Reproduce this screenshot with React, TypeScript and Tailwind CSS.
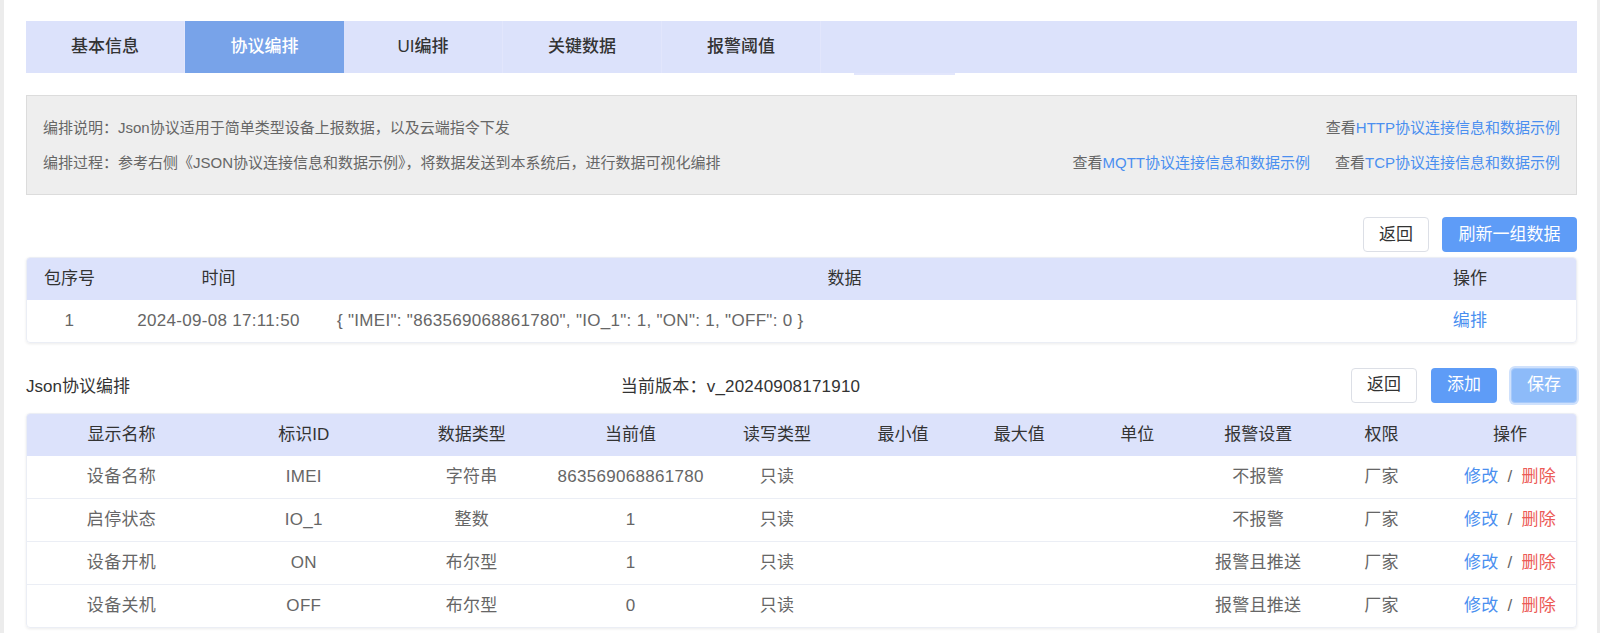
import React from "react";

const tabs = ["基本信息", "协议编排", "UI编排", "关键数据", "报警阈值"];

const c2 = [
  "w-[189px]",
  "w-[176px]",
  "w-[160px]",
  "w-[158px]",
  "w-[135px]",
  "w-[117px]",
  "w-[116px]",
  "w-[120px]",
  "w-[122px]",
  "w-[125px]",
  "w-[132px]",
];

const head2 = ["显示名称", "标识ID", "数据类型", "当前值", "读写类型", "最小值", "最大值", "单位", "报警设置", "权限", "操作"];

const rows2 = [
  ["设备名称", "IMEI", "字符串", "863569068861780", "只读", "", "", "", "不报警", "厂家"],
  ["启停状态", "IO_1", "整数", "1", "只读", "", "", "", "不报警", "厂家"],
  ["设备开机", "ON", "布尔型", "1", "只读", "", "", "", "报警且推送", "厂家"],
  ["设备关机", "OFF", "布尔型", "0", "只读", "", "", "", "报警且推送", "厂家"],
];

function Link({ children }: { children: React.ReactNode }) {
  return (
    <span className="text-[#666666]">
      查看<span className="text-[#4a8ff0]">{children}</span>
    </span>
  );
}

export default function App() {
  return (
    <div className="min-h-[633px] bg-[#ececec] pl-[4px] pr-[3px] font-['Liberation_Sans','Noto_Sans_CJK_SC',sans-serif]">
      <div className="h-[633px] overflow-hidden bg-white pl-[22px] pr-[20px] pt-[21px]">
        {/* Tabs */}
        <div className="relative flex h-[52px] bg-[#dce2fb]">
          {tabs.map((t, i) => (
            <div
              key={t}
              className={
                i === 1
                  ? "flex w-[159px] items-center justify-center bg-[#78a3e9] text-[17px] font-medium text-white"
                  : "flex w-[159px] items-center justify-center border-r border-[#e2e6fc] text-[17px] font-medium text-[#333333]"
              }
            >
              {t}
            </div>
          ))}
          <div className="absolute left-[828px] top-[52px] h-[2px] w-[101px] bg-[#e2e6fc]" />
        </div>

        {/* Info box */}
        <div className="mt-[22px] h-[100px] border border-[#dcdcdc] bg-[#eeeeee] pl-[16px] pr-[16px] pt-[22px] text-[15px] text-[#666666]">
          <div className="flex h-[20px] items-center justify-between">
            <span>编排说明：Json协议适用于简单类型设备上报数据，以及云端指令下发</span>
            <Link>HTTP协议连接信息和数据示例</Link>
          </div>
          <div className="mt-[15px] flex h-[20px] items-center justify-between">
            <span>编排过程：参考右侧《JSON协议连接信息和数据示例》，将数据发送到本系统后，进行数据可视化编排</span>
            <div className="flex gap-[25px]">
              <Link>MQTT协议连接信息和数据示例</Link>
              <Link>TCP协议连接信息和数据示例</Link>
            </div>
          </div>
        </div>

        {/* Buttons row 1 */}
        <div className="mt-[22px] flex justify-end gap-[13px]">
          <button className="h-[35px] w-[66px] rounded-[4px] border border-[#dcdfe6] bg-white text-[17px] text-[#333333]">
            返回
          </button>
          <button className="h-[35px] w-[135px] rounded-[4px] bg-[#5e9cf7] text-[17px] text-white">
            刷新一组数据
          </button>
        </div>

        {/* Table 1 */}
        <div className="mt-[5px] overflow-hidden rounded-[4px] border border-[#ebeef5] shadow-[0_1px_3px_rgba(0,0,0,0.08)]">
          <div className="flex h-[42px] items-center bg-[#dce2fb] text-[17px] text-[#333333]">
            <div className="w-[85px] text-center">包序号</div>
            <div className="w-[213px] text-center">时间</div>
            <div className="w-[1039px] text-center">数据</div>
            <div className="flex-1 text-center">操作</div>
          </div>
          <div className="flex h-[42px] items-center text-[17px] tracking-[0.3px] text-[#666666]">
            <div className="w-[85px] text-center">1</div>
            <div className="w-[213px] text-center">2024-09-08 17:11:50</div>
            <div className="w-[1039px] pl-[12px]">{'{ "IMEI": "863569068861780", "IO_1": 1, "ON": 1, "OFF": 0 }'}</div>
            <div className="flex-1 text-center text-[#4a8ff0]">编排</div>
          </div>
        </div>

        {/* Section 2 header */}
        <div className="mt-[23px] flex h-[38px] items-center justify-between text-[17px] text-[#333333]">
          <span className="pt-[4px]">Json协议编排</span>
          <span className="pt-[4px] tracking-[0.2px]">当前版本：v_20240908171910</span>
          <div className="flex gap-[14px]">
            <button className="h-[35px] w-[66px] rounded-[4px] border border-[#dcdfe6] bg-white text-[17px] text-[#333333]">
              返回
            </button>
            <button className="h-[35px] w-[66px] rounded-[4px] bg-[#5e9cf7] text-[17px] text-white">添加</button>
            <button className="h-[35px] w-[66px] rounded-[4px] border border-[#a6c9fa] bg-[#8dbbf9] text-[17px] text-white ring-2 ring-[#cfe1fc]">
              保存
            </button>
          </div>
        </div>

        {/* Table 2 */}
        <div className="mt-[9px] overflow-hidden rounded-[4px] border border-[#ebeef5] shadow-[0_1px_3px_rgba(0,0,0,0.08)]">
          <div className="flex h-[42px] items-center bg-[#dce2fb] text-[17px] text-[#333333]">
            {head2.map((h, i) => (
              <div key={h} className={`${c2[i]} text-center`}>
                {h}
              </div>
            ))}
          </div>
          {rows2.map((r, ri) => (
            <div
              key={ri}
              className={
                ri < rows2.length - 1
                  ? "flex h-[43px] items-center border-b border-[#ebeef5] text-[17px] tracking-[0.3px] text-[#666666]"
                  : "flex h-[42px] items-center text-[17px] tracking-[0.3px] text-[#666666]"
              }
            >
              {r.map((v, i) => (
                <div key={i} className={`${c2[i]} text-center`}>
                  {v}
                </div>
              ))}
              <div className={`${c2[10]} text-center`}>
                <span className="text-[#4a8ff0]">修改</span>
                <span className="mx-[9px] text-[#666666]">/</span>
                <span className="text-[#ec5b57]">删除</span>
              </div>
            </div>
          ))}
        </div>
      </div>
    </div>
  );
}
